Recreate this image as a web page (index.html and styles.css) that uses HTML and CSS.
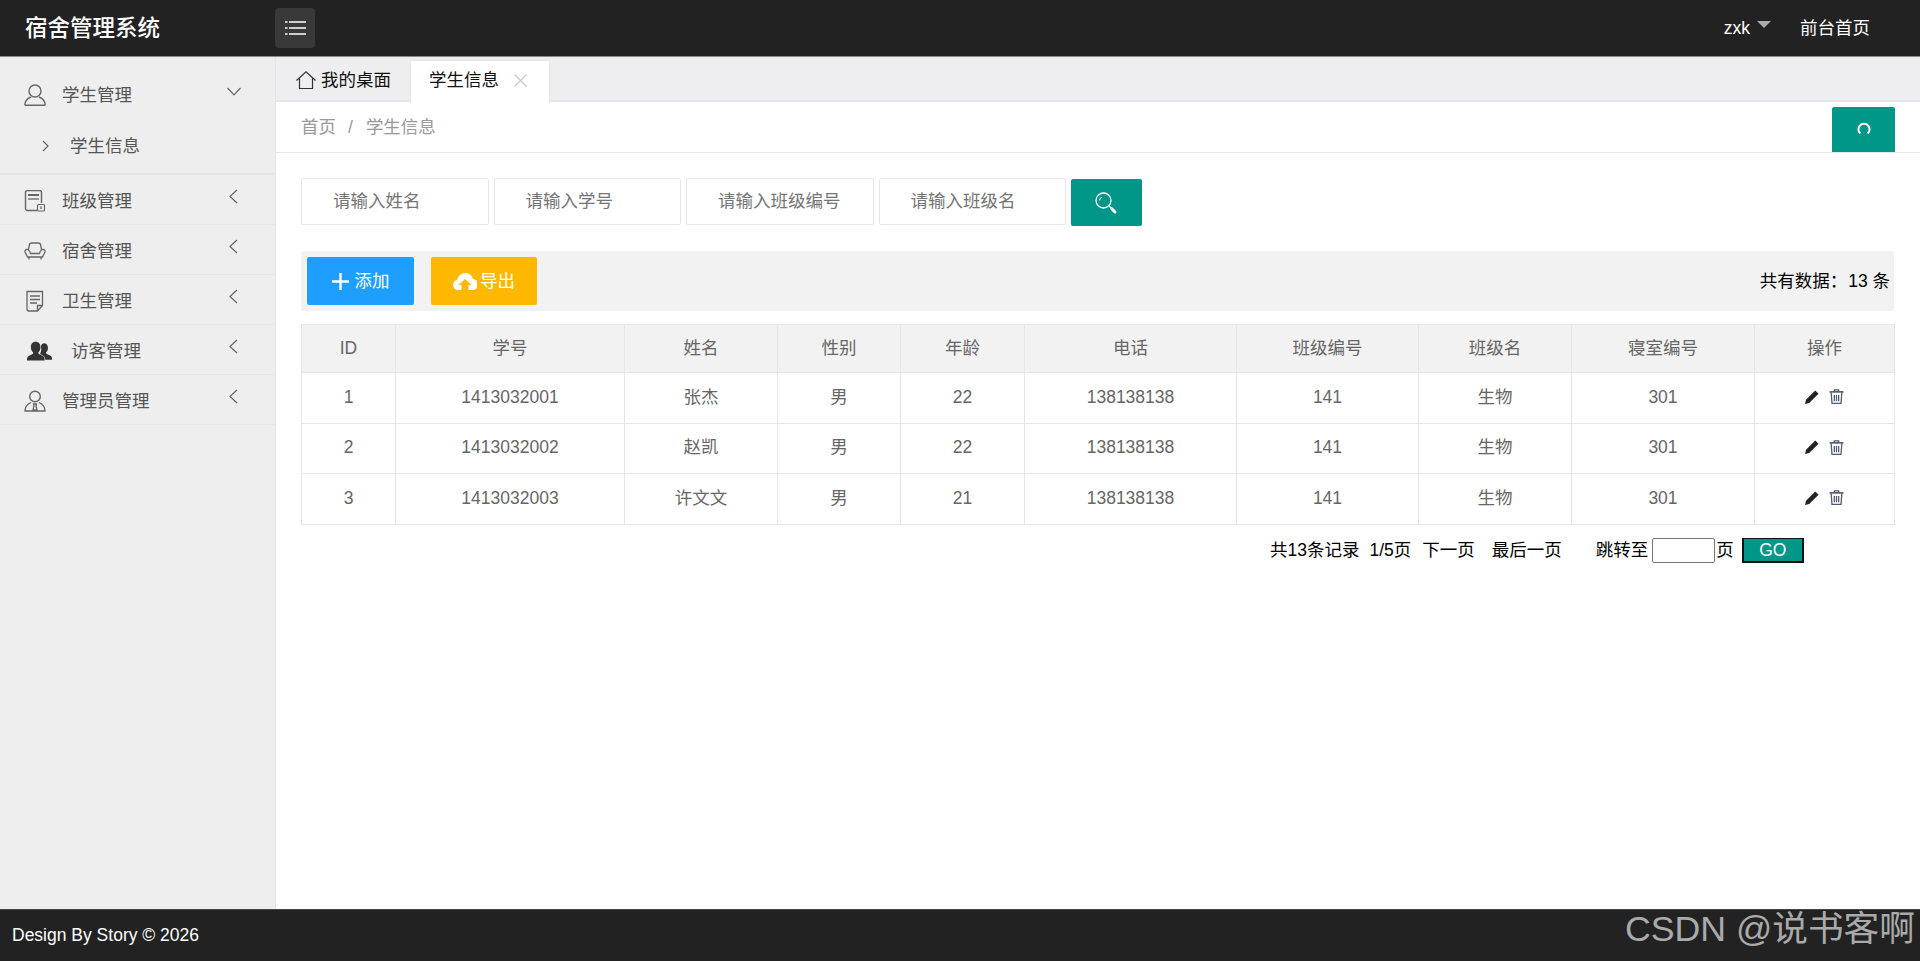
FILE: index.html
```html
<!DOCTYPE html>
<html lang="zh-CN">
<head>
<meta charset="utf-8">
<title>宿舍管理系统</title>
<link rel="stylesheet" href="styles.css">
</head>
<body>
<header class="top">
  <div class="logo">宿舍管理系统</div>
  <button class="menu-btn" type="button" aria-label="菜单">
    <svg width="21" height="14" viewBox="0 0 21 14"><path d="M0 1h2.500M4 1h17M0 7h2.500M4 7h17M0 13h2.500M4 13h17" stroke="#fff" stroke-width="1.300" fill="none"/></svg>
  </button>
  <nav class="top-right">
    <a class="user">zxk<i class="caret"></i></a>
    <a class="home-link">前台首页</a>
  </nav>
</header>
<div class="middle">
  <aside class="side">
    <div class="group group-open">
      <div class="item">
        <svg class="ico" width="22" height="22" viewBox="0 0 22 22"><circle cx="11" cy="7" r="6" fill="none" stroke="#666" stroke-width="1.400"/><path d="M.8 21.200c0-4 2.500-6.700 6.200-8.200M21.200 21.200c0-4-2.500-6.700-6.200-8.200M.8 21.200h20.400" fill="none" stroke="#666" stroke-width="1.400"/></svg>
        <span class="label">学生管理</span>
        <svg class="arrow-down" width="14" height="9" viewBox="0 0 14 9"><path d="M.5 1 7 7.800 13.500 1" fill="none" stroke="#666" stroke-width="1.200"/></svg>
      </div>
      <div class="sub">
        <svg width="7" height="12" viewBox="0 0 7 12"><path d="M1 1l5 5-5 5" fill="none" stroke="#666" stroke-width="1.200"/></svg>
        <span>学生信息</span>
      </div>
    </div>
    <div class="item">
      <svg class="ico" width="22" height="22" viewBox="0 0 22 22"><path d="M13 20.500H3.500a2 2 0 0 1-2-2V2.500a2 2 0 0 1 2-2h12a2 2 0 0 1 2 2V13" fill="none" stroke="#666" stroke-width="1.400"/><path d="M4 5h11" stroke="#666" stroke-width="2"/><path d="M4 9h11" stroke="#666" stroke-width="1.300"/><rect x="13.500" y="14.500" width="7" height="6.500" rx="1" fill="none" stroke="#666" stroke-width="1.200"/><path d="M17 16.500v2.500" stroke="#666" stroke-width="1.400"/></svg>
      <span class="label">班级管理</span>
      <svg class="arrow" width="9" height="15" viewBox="0 0 9 15"><path d="M8 1 1 7.500 8 14" fill="none" stroke="#666" stroke-width="1.200"/></svg>
    </div>
    <div class="item">
      <svg class="ico" width="22" height="18" viewBox="0 0 22 18"><path d="M4.500 7.500 5.500 2.500C5.800 1.300 6.500 1 7.500 1h7c1 0 1.700.3 2 1.500l1 5M4.500 8c1.200 .8 1.800 2 2 3.500h9c.2-1.500.8-2.700 2-3.500M4.500 7.500H3C1.500 7.500.7 8.500 1 10l2.500 5h15L21 10c.3-1.500-.5-2.500-2-2.500h-1.500M5 15v2.500M17 15v2.500" fill="none" stroke="#666" stroke-width="1.300"/></svg>
      <span class="label">宿舍管理</span>
      <svg class="arrow" width="9" height="15" viewBox="0 0 9 15"><path d="M8 1 1 7.500 8 14" fill="none" stroke="#666" stroke-width="1.200"/></svg>
    </div>
    <div class="item">
      <svg class="ico" width="22" height="22" viewBox="0 0 22 22"><path d="M3 1.500h15.500V15.500l-5 5.500H5a2 2 0 0 1-2-2zM6 6h10M6 9.500h10M6 13h7M13.500 21v-5.500h5" fill="none" stroke="#666" stroke-width="1.300"/></svg>
      <span class="label">卫生管理</span>
      <svg class="arrow" width="9" height="15" viewBox="0 0 9 15"><path d="M8 1 1 7.500 8 14" fill="none" stroke="#666" stroke-width="1.200"/></svg>
    </div>
    <div class="item item-guest">
      <svg class="ico-wide" width="25" height="20" viewBox="0 0 26 20"><path d="M17.500 2c2.700 0 4.300 2 4.300 4.500s-.9 4-2.100 5c0 1.300 1 1.700 2.500 2.300 2 .8 3.800 1.600 3.800 3.700v1.500h-7c0-2.800-2-4-4-5-1.300-.6-1.500-1.400-1-2.300.8-1.300 1-3 .6-5.300-.2-1.400.6-4.400 2.900-4.400z" fill="#333"/><path d="M9 .5c3 0 5 2.200 5 5.300 0 2.500-1 4.500-2.300 5.700 0 1.500 1.100 2 2.800 2.700 2.200.9 3.800 1.800 3.800 4V20H0v-1.800c0-2.200 1.600-3.100 3.800-4 1.700-.7 2.700-1.200 2.700-2.700C5.100 10.300 4 8.300 4 5.800 4 2.700 6 .5 9 .5z" fill="#333"/></svg>
      <span class="label">访客管理</span>
      <svg class="arrow" width="9" height="15" viewBox="0 0 9 15"><path d="M8 1 1 7.500 8 14" fill="none" stroke="#666" stroke-width="1.200"/></svg>
    </div>
    <div class="item">
      <svg class="ico" width="22" height="22" viewBox="0 0 22 22"><circle cx="11" cy="6.500" r="5.300" fill="none" stroke="#666" stroke-width="1.400"/><path d="M7 12.500C3.500 14 1 16.500 1 21h20c0-4.500-2.500-7-6-8.500M9.500 14h3l-.5 2 1 4h-4l1-4z" fill="none" stroke="#666" stroke-width="1.300"/></svg>
      <span class="label">管理员管理</span>
      <svg class="arrow" width="9" height="15" viewBox="0 0 9 15"><path d="M8 1 1 7.500 8 14" fill="none" stroke="#666" stroke-width="1.200"/></svg>
    </div>
  </aside>
  <main class="main">
    <div class="tabs">
      <div class="tab-home">
        <svg width="20" height="18" viewBox="0 0 20 18"><path d="M.5 9.500 10 .8l9.500 8.700M3.500 7.500v10h13v-10" fill="none" stroke="#333" stroke-width="1.200"/></svg>
        <span>我的桌面</span>
      </div>
      <div class="tab-active">
        <span>学生信息</span>
        <svg width="13" height="13" viewBox="0 0 13 13"><path d="M.5.500l12 12M12.500.500l-12 12" stroke="#c9c9c9" stroke-width="1.300"/></svg>
      </div>
    </div>
    <div class="crumb">
      <span>首页</span><span class="sep">/</span><span>学生信息</span>
      <a class="refresh"><svg width="14" height="13" viewBox="0 0 14 13"><path d="M3.400 11.600A5.600 5.600 0 1 1 10.600 11.600" fill="none" stroke="#fff" stroke-width="2"/></svg></a>
    </div>
    <div class="body">
      <form class="search">
        <input class="field" placeholder="请输入姓名">
        <input class="field" placeholder="请输入学号">
        <input class="field" placeholder="请输入班级编号">
        <input class="field" placeholder="请输入班级名">
        <button class="search-btn" type="button" aria-label="搜索">
          <svg width="22" height="22" viewBox="0 0 22 22"><circle cx="8.500" cy="8.500" r="7.500" fill="none" stroke="#fff" stroke-width="1.300"/><path d="M4.500 8.500A4 4 0 0 1 7 5" fill="none" stroke="#fff"/><path d="M14 14l2 2" stroke="#fff" stroke-width="1.300"/><path d="M16.500 16.500l3.500 3.500" stroke="#fff" stroke-width="3" stroke-linecap="round"/></svg>
        </button>
      </form>
      <div class="toolbar">
        <button class="btn btn-add" type="button">
          <svg width="17" height="17" viewBox="0 0 17 17"><path d="M8.500 0v17M0 8.500h17" stroke="#fff" stroke-width="2.400"/></svg>
          <span>添加</span>
        </button>
        <button class="btn btn-export" type="button">
          <svg width="24" height="17" viewBox="0 0 24 17"><path d="M5 17a5 5 0 0 1-.8-9.900C5 3 8.300 0 12.300 0c3.700 0 6.700 2.500 7.700 6a5.500 5.500 0 0 1-.5 11h-4v-5h3l-6.500-6-6.500 6h3v5z" fill="#fff"/></svg>
          <span>导出</span>
        </button>
        <span class="total">共有数据：<span class="total-num">13 条</span></span>
      </div>
      <table class="grid">
        <colgroup>
          <col class="c-id"><col class="c-no"><col class="c-name"><col class="c-sex"><col class="c-age"><col class="c-tel"><col class="c-cls"><col class="c-cname"><col class="c-room"><col class="c-op">
        </colgroup>
        <thead>
          <tr><th>ID</th><th>学号</th><th>姓名</th><th>性别</th><th>年龄</th><th>电话</th><th>班级编号</th><th>班级名</th><th>寝室编号</th><th>操作</th></tr>
        </thead>
        <tbody>
          <tr><td>1</td><td>1413032001</td><td>张杰</td><td>男</td><td>22</td><td>138138138</td><td>141</td><td>生物</td><td>301</td><td class="ops">
            <svg width="14" height="14" viewBox="0 0 14 14"><path d="M0 14l1-4.200L10.300.5l3.200 3.200L4.200 13z" fill="#222"/></svg>
            <svg width="15" height="15" viewBox="0 0 14 14"><path d="M.5 2.700h13" stroke="#444c5c" stroke-width="1.400"/><path d="M5 2.500V.8h4v1.700M2 3l.8 10.500h8.400L12 3M5 5.500v6M7 5.500v6M9 5.500v6" fill="none" stroke="#4d5a70" stroke-width="1.200"/></svg>
          </td></tr>
          <tr><td>2</td><td>1413032002</td><td>赵凯</td><td>男</td><td>22</td><td>138138138</td><td>141</td><td>生物</td><td>301</td><td class="ops">
            <svg width="14" height="14" viewBox="0 0 14 14"><path d="M0 14l1-4.200L10.300.5l3.200 3.200L4.200 13z" fill="#222"/></svg>
            <svg width="15" height="15" viewBox="0 0 14 14"><path d="M.5 2.700h13" stroke="#444c5c" stroke-width="1.400"/><path d="M5 2.500V.8h4v1.700M2 3l.8 10.500h8.400L12 3M5 5.500v6M7 5.500v6M9 5.500v6" fill="none" stroke="#4d5a70" stroke-width="1.200"/></svg>
          </td></tr>
          <tr><td>3</td><td>1413032003</td><td>许文文</td><td>男</td><td>21</td><td>138138138</td><td>141</td><td>生物</td><td>301</td><td class="ops">
            <svg width="14" height="14" viewBox="0 0 14 14"><path d="M0 14l1-4.200L10.300.5l3.200 3.200L4.200 13z" fill="#222"/></svg>
            <svg width="15" height="15" viewBox="0 0 14 14"><path d="M.5 2.700h13" stroke="#444c5c" stroke-width="1.400"/><path d="M5 2.500V.8h4v1.700M2 3l.8 10.500h8.400L12 3M5 5.500v6M7 5.500v6M9 5.500v6" fill="none" stroke="#4d5a70" stroke-width="1.200"/></svg>
          </td></tr>
        </tbody>
      </table>
      <div class="pager">
        <span>共13条记录</span>
        <span class="p1">1/5页</span>
        <a class="p2">下一页</a>
        <a class="p3">最后一页</a>
        <span class="p4">跳转至</span>
        <input class="jump" type="text">
        <span>页</span>
        <button class="go" type="button">GO</button>
      </div>
    </div>
  </main>
</div>
<footer class="foot">
  <span>Design By Story © 2026</span>
  <span class="mark">CSDN @说书客啊</span>
</footer>
</body>
</html>
```

FILE: styles.css
```css
* { box-sizing: border-box; }
html, body { height: 100%; }
body {
  margin: 0;
  height: 961px;
  display: flex;
  flex-direction: column;
  overflow: hidden;
  background: #fff;
  color: #666;
  font: 17.5px/25px "Liberation Sans", "Noto Sans CJK SC", sans-serif;
}
.top {
  flex: 0 0 57px;
  display: flex;
  align-items: center;
  background: #222;
  border-bottom: 1px solid #888;
  color: #fff;
}
.logo { width: 275px; padding-left: 25px; font-size: 22.500px; font-weight: 500; }
.menu-btn {
  width: 40px; height: 40px; padding: 0; border: 0; border-radius: 4px;
  background: #393939; display: flex; align-items: center; justify-content: center;
}
.top-right { margin-left: auto; display: flex; align-items: center; padding-right: 50px; }
.user { display: flex; align-items: center; margin-right: 29px; }
.caret {
  width: 0; height: 0; margin: -8px 0 0 7px;
  border-left: 7px solid transparent; border-right: 7px solid transparent; border-top: 7px solid #aaa;
}
.middle { flex: 1; display: flex; min-height: 0; }
.side {
  width: 276px; flex: none; background: #eee; border-right: 1px solid #e6e6e6; color: #555;
}
.item {
  height: 50px; display: flex; align-items: center; position: relative;
  border-bottom: 1px solid #e6e6e6; padding: 3px 0 0 24px;
}
.ico { width: 22px; margin-right: 16px; flex: none; }
.ico-wide { margin-right: 19px; margin-left: 3px; flex: none; }
.label { color: #555; }
.arrow { position: absolute; left: 229px; top: 14px; }
.arrow-down { position: absolute; left: 227px; top: 30px; }
.group-open { border-bottom: 2px solid #e6e6e6; height: 118px; }
.group-open .item { border-bottom: 0; height: 68px; padding-top: 8px; }
.sub { height: 42px; display: flex; align-items: center; padding-left: 42px; }
.sub span { margin-left: 21px; }
.main { flex: 1; min-width: 0; display: flex; flex-direction: column; }
.tabs {
  height: 45px; flex: none; background: #eeeef0; border-bottom: 2px solid #e6e6e6;
  display: flex; color: #111; align-items: flex-start;
}
.tab-home { width: 134px; height: 43px; display: flex; align-items: center; padding: 3px 0 0 20px; gap: 5px; }
.tab-active {
  margin-top: 3px; height: 43px; width: 140px; background: #fff; color: #111;
  border: 1px solid #e6e6e6; border-bottom: 0; display: flex; align-items: center; padding: 0 0 3px 18px; gap: 15px; position: relative;
}
.crumb {
  height: 51px; flex: none; display: flex; align-items: center; padding: 0 0 0 25px;
  border-bottom: 1px solid #e6e6e6; color: #999; position: relative;
}
.sep { margin: 0 13px 0 12px; }
.refresh {
  position: absolute; right: 25px; top: 5px; width: 63px; height: 45px; padding-bottom: 3px;
  background: #009688; border-radius: 2px 2px 0 0; display: flex; align-items: center; justify-content: center;
}
.body { padding: 25px 26px 0 25px; }
.search { display: flex; gap: 5px; height: 48px; }
.field {
  width: 187.500px; height: 47px; padding: 0 10px 0 31px; border: 1px solid #e6e6e6; border-radius: 2px;
  font: inherit; outline: 0; color: #333;
}
.field::placeholder { color: #757575; }
.search-btn {
  width: 71px; height: 47px; margin-top: 1px; border: 0; border-radius: 2px; background: #009688;
  display: flex; align-items: center; justify-content: center; padding: 0 2px 0 0;
}
.toolbar {
  height: 60px; margin-top: 25px; padding: 6px 4px 6px 6px; background: #f2f2f2; border-radius: 2px;
  display: flex; align-items: center; color: #000;
}
.btn {
  height: 48px; border: 0; border-radius: 2px; color: #fff; font: inherit;
  display: flex; align-items: center; justify-content: center; padding: 0;
}
.btn-add { width: 107px; background: #1e9fff; gap: 6px; }
.btn-export { width: 106px; background: #ffb800; margin-left: 17px; gap: 3px; }
.total { margin-left: auto; }
.total-num { margin-left: 1px; }
.grid {
  width: 1593px; margin-top: 13px; border-collapse: collapse; table-layout: fixed; text-align: center; color: #666;
}
.grid th, .grid td { border: 1px solid #e6e6e6; padding: 0; font-weight: 400; }
.grid td { padding-bottom: 2px; }
.grid th { height: 48px; background: #f2f2f2; }
.grid tbody tr:nth-child(1) td { height: 51px; }
.grid tbody tr:nth-child(2) td { height: 50px; }
.grid tbody tr:nth-child(3) td { height: 51px; }
.grid .ops { padding-bottom: 4px; }
.c-id { width: 94px; }
.c-no { width: 229px; }
.c-name { width: 153px; }
.c-sex { width: 123px; }
.c-age { width: 124px; }
.c-tel { width: 212px; }
.c-cls { width: 182px; }
.c-cname { width: 153px; }
.c-room { width: 183px; }
.c-op { width: 140px; }
.ops svg { vertical-align: middle; margin: 0 3px; }
.pager { display: flex; align-items: center; height: 25px; margin-top: 13px; padding-left: 969px; color: #000; }
.p1 { margin-left: 10px; }
.p2 { margin-left: 11px; }
.p3 { margin-left: 17px; }
.p4 { margin-left: 34px; }
.jump { width: 63px; height: 25px; margin: 0 1px 0 4px; padding: 0; border: 1px solid #767676; border-radius: 2px; background: #fff; }
.go {
  width: 62px; height: 25px; margin-left: 8px; padding: 0; background: #009688; color: #fff; font: inherit;
  border: 2px solid #111; border-top-width: 1px; line-height: 20px;
}
.foot {
  flex: 0 0 52px; background: #222; border-top: 1px solid #444; color: #fff; padding-left: 12px;
  display: flex; align-items: center; position: relative;
}
.mark { position: absolute; right: 5px; top: -3px; font-size: 35.700px; line-height: 44px; color: #aaa; white-space: nowrap; }
```
